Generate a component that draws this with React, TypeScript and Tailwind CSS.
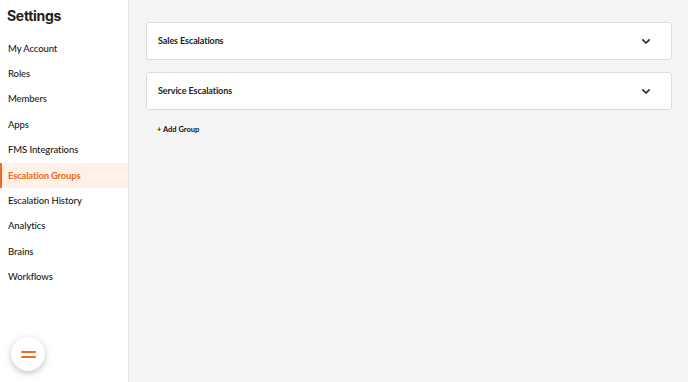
import React from "react";

const items = [
  "My Account",
  "Roles",
  "Members",
  "Apps",
  "FMS Integrations",
  "Escalation Groups",
  "Escalation History",
  "Analytics",
  "Brains",
  "Workflows",
];

function Chevron() {
  return (
    <svg width="10" height="7" viewBox="0 0 10 7" fill="none">
      <path d="M1.8 1.8 L5 5 L8.2 1.8" stroke="#2b2b2b" strokeWidth="1.7" strokeLinecap="round" strokeLinejoin="round" />
    </svg>
  );
}

export default function App() {
  return (
    <div className="flex h-[382px] w-[688px] overflow-hidden bg-[#f4f4f4]" style={{ fontFamily: "Lato, 'Open Sans', sans-serif" }}>
      <aside className="relative flex w-[129px] shrink-0 flex-col border-r border-[#e2e2e2] bg-white">
        <h1 className="pl-[7px] pt-[6px] text-[14px] font-bold leading-[20px] tracking-[-0.3px] text-[#1e1e1e]" style={{ fontFamily: "Inter, sans-serif" }}>
          Settings
        </h1>
        <nav className="mt-[10px] flex flex-col">
          {items.map((it) => {
            const active = it === "Escalation Groups";
            return (
              <div
                key={it}
                className={
                  active
                    ? "flex h-[25.4px] items-center border-l-2 border-[#f26a21] bg-[#fff0e8] pl-[6px] text-[9.5px] font-bold tracking-[-0.2px] text-[#f26a21]"
                    : "flex h-[25.4px] items-center pl-[8px] text-[9.5px] font-medium tracking-[-0.1px] text-[#1a1a1a]"
                }
              >
                {it}
              </div>
            );
          })}
        </nav>
        <button className="absolute bottom-[11px] left-[11px] flex h-[34px] w-[34px] flex-col items-center justify-center gap-[3px] rounded-full bg-white shadow-[0_2px_6px_rgba(0,0,0,0.25)]">
          <span className="block h-[2px] w-[15px] rounded bg-[#f26a21]" />
          <span className="block h-[2px] w-[15px] rounded bg-[#f26a21]" />
        </button>
      </aside>
      <main className="flex flex-1 flex-col pl-[17px] pr-[16px] pt-[22px]">
        <div className="flex flex-col gap-[12px]">
          {["Sales Escalations", "Service Escalations"].map((t) => (
            <div key={t} className="flex h-[38px] items-center justify-between rounded-[3px] border border-[#dcdcdc] bg-white pl-[11px] pr-[20px]">
              <span className="text-[9px] font-bold tracking-[-0.1px] text-[#222]">{t}</span>
              <Chevron />
            </div>
          ))}
        </div>
        <div className="mt-[14px] pl-[11px] text-[7.5px] font-bold text-[#111]">+ Add Group</div>
      </main>
    </div>
  );
}
